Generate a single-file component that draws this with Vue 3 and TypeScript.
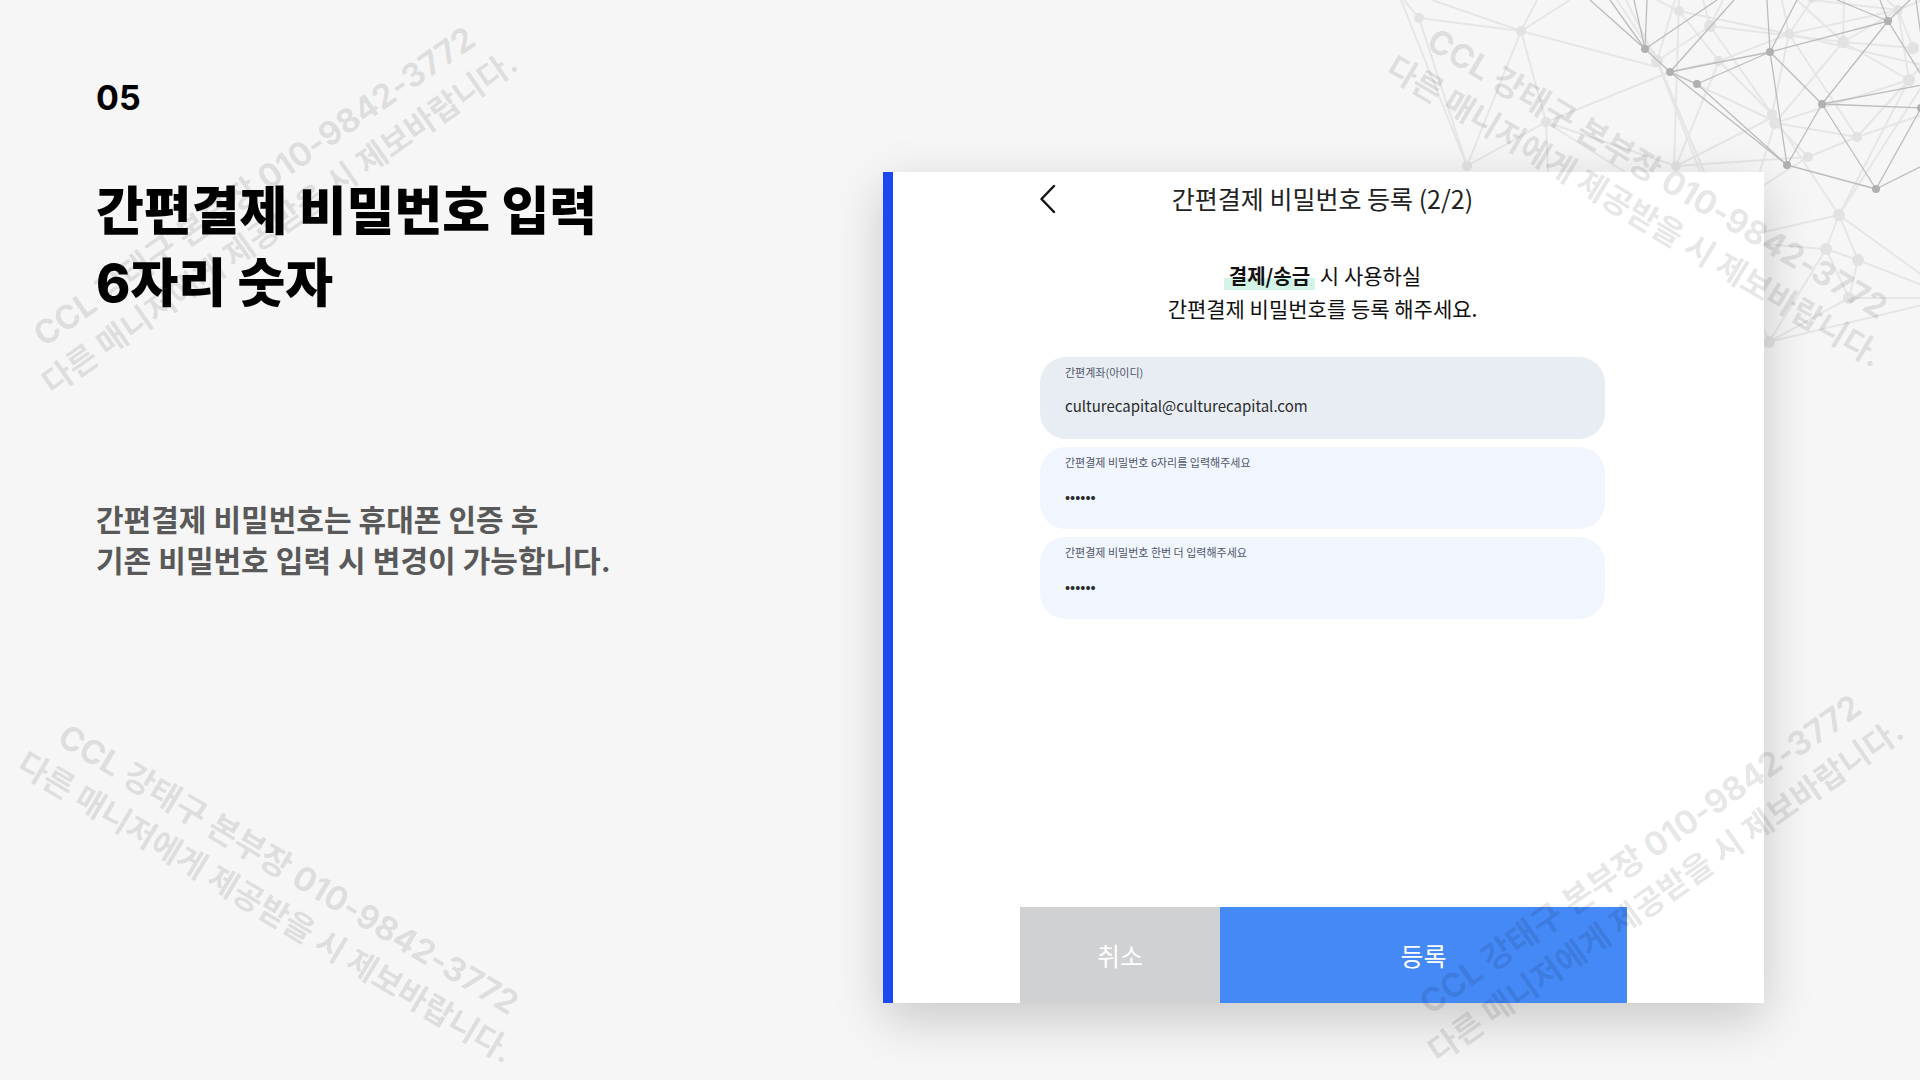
<script setup lang="ts">
import { ref } from 'vue'

interface Dot { x: number; y: number; r: number }
type Line = [number, number, number, number]

const accountId = ref('culturecapital@culturecapital.com')
const pin = ref('123456')
const pinConfirm = ref('123456')

const watermarks = ['top-left', 'top-right', 'bottom-left', 'bottom-right']

const toDots = (points: [number, number][], r: number): Dot[] => points.map(([x, y]) => ({ x, y, r }))

const darkDots = toDots(
  [[255, 49], [280, 72], [307, 84], [380, 52], [498, 21], [432, 104], [397, 165], [486, 189], [531, 108]],
  4,
)

const lightDots = [
  ...toDots(
    [[29, 18], [131, 31], [156, 122], [77, 166], [289, 11], [329, 61], [399, 34], [508, 10], [382, 114], [418, 157], [467, 137], [286, 166], [422, -2]],
    5,
  ),
  ...toDots(
    [[267, 61], [320, 26], [453, 42], [523, 48], [519, 80], [385, 123], [449, 215], [436, 249], [468, 260], [459, 298], [379, 342]],
    6,
  ),
]

const darkLines: Line[] = [
  [255, 49, 200, 0], [255, 49, 220, 0], [255, 49, 244, 0], [255, 49, 257, 0], [255, 49, 280, 72], [255, 49, 327, 0],
  [280, 72, 344, 0], [280, 72, 380, 52], [307, 84, 380, 52], [280, 72, 307, 84], [280, 72, 397, 165], [307, 84, 397, 165],
  [380, 52, 377, 0], [380, 52, 407, 0], [380, 52, 498, 21], [380, 52, 432, 104], [380, 52, 397, 165],
  [498, 21, 447, 0], [498, 21, 432, 104], [498, 21, 490, 0], [498, 21, 520, 0], [498, 21, 532, 76],
  [432, 104, 532, 85], [432, 104, 531, 108], [432, 104, 397, 165], [432, 104, 486, 189],
  [397, 165, 486, 189], [486, 189, 531, 108], [486, 189, 532, 166], [526, 0, 531, 36],
]

const lightLines: Line[] = [
  [29, 18, 131, 31], [29, 18, 14, 0], [11, 0, 77, 166], [29, 18, 77, 166], [131, 31, 42, 0], [131, 31, 147, 0],
  [131, 31, 180, 0], [131, 31, 267, 67], [131, 31, 77, 166], [131, 31, 156, 122], [156, 122, 77, 166], [156, 122, 280, 72],
  [156, 122, 158, 174], [156, 122, 238, 174], [156, 122, 286, 166], [267, 61, 227, 0], [267, 61, 236, 0], [267, 61, 311, 174],
  [263, 50, 315, 174], [289, 0, 284, 166], [267, 61, 285, 0], [289, 11, 267, 0], [289, 11, 399, 34], [289, 11, 329, 61],
  [329, 61, 382, 114], [320, 26, 453, 42], [320, 26, 313, 0], [320, 26, 382, 114], [329, 61, 286, 166], [329, 61, 399, 34],
  [267, 61, 320, 26], [280, 72, 382, 120], [280, 72, 329, 61], [320, 26, 333, 0], [399, 34, 392, 0], [399, 34, 422, 0],
  [399, 34, 508, 10], [399, 34, 382, 114], [399, 34, 467, 137], [399, 34, 532, 65], [453, 42, 454, 0], [453, 42, 523, 48],
  [453, 42, 519, 80], [453, 42, 407, 0], [453, 42, 385, 123], [453, 42, 508, 10], [422, 0, 508, 10], [508, 10, 523, 48],
  [508, 10, 497, 0], [508, 10, 519, 80], [508, 10, 532, 0], [519, 80, 385, 123], [519, 80, 467, 137], [519, 80, 449, 215],
  [532, 86, 449, 215], [385, 123, 467, 137], [385, 123, 418, 157], [418, 157, 467, 137], [418, 157, 286, 166], [382, 114, 449, 215],
  [286, 166, 385, 116], [385, 123, 369, 174], [467, 137, 532, 115], [532, 65, 519, 80], [374, 185, 418, 157],
  [449, 215, 374, 232], [449, 215, 436, 249], [449, 215, 468, 260], [449, 215, 532, 275], [374, 244, 436, 249],
  [436, 249, 468, 260], [436, 249, 459, 298], [436, 249, 379, 342], [468, 260, 459, 298], [468, 260, 532, 285],
  [459, 298, 532, 298], [459, 298, 379, 342], [379, 342, 532, 305], [379, 342, 370, 320],
]
</script>

<template>
  <main class="slide">
    <svg class="network" width="530" height="360" viewBox="0 0 530 360" aria-hidden="true">
      <g class="light-lines">
        <line v-for="(l, i) in lightLines" :key="i" :x1="l[0]" :y1="l[1]" :x2="l[2]" :y2="l[3]" />
      </g>
      <g class="light-dots">
        <circle v-for="(d, i) in lightDots" :key="i" :cx="d.x" :cy="d.y" :r="d.r" />
      </g>
      <g class="dark-lines">
        <line v-for="(l, i) in darkLines" :key="i" :x1="l[0]" :y1="l[1]" :x2="l[2]" :y2="l[3]" />
      </g>
      <g class="dark-dots">
        <circle v-for="(d, i) in darkDots" :key="i" :cx="d.x" :cy="d.y" :r="d.r" />
      </g>
    </svg>

    <section class="intro">
      <p class="step">05</p>
      <h1 class="title">간편결제 비밀번호 입력<br />6자리 숫자</h1>
      <p class="note">간편결제 비밀번호는 휴대폰 인증 후<br />기존 비밀번호 입력 시 변경이 가능합니다.</p>
    </section>

    <section class="card">
      <form class="form" @submit.prevent>
        <header class="bar">
          <button class="back" type="button" aria-label="뒤로">
            <svg width="20" height="30" viewBox="0 0 20 30" fill="none" stroke="#111" stroke-width="2.4" stroke-linecap="round" stroke-linejoin="round">
              <path d="M14 3 L1.5 16 L14 29" />
            </svg>
          </button>
          <h2 class="bar-title">간편결제 비밀번호 등록 (2/2)</h2>
        </header>

        <p class="guide"><strong class="mark">결제/송금</strong> 시 사용하실<br />간편결제 비밀번호를 등록 해주세요.</p>

        <div class="fields">
          <div class="field field-locked">
            <label for="account">간편계좌(아이디)</label>
            <input id="account" v-model="accountId" type="text" readonly />
          </div>
          <div class="field">
            <label for="pin">간편결제 비밀번호 6자리를 입력해주세요</label>
            <input id="pin" v-model="pin" type="password" maxlength="6" />
          </div>
          <div class="field">
            <label for="pin-confirm">간편결제 비밀번호 한번 더 입력해주세요</label>
            <input id="pin-confirm" v-model="pinConfirm" type="password" maxlength="6" />
          </div>
        </div>

        <div class="actions">
          <button class="cancel" type="button">취소</button>
          <button class="submit" type="submit">등록</button>
        </div>
      </form>
    </section>

    <p v-for="place in watermarks" :key="place" class="watermark" :class="place">
      <span class="contact">CCL 강태구 본부장 010-9842-3772</span><br />다른 매니저에게 제공받을 시 제보바랍니다.
    </p>
  </main>
</template>

<style>
body {
  margin: 0;
  background: #f6f6f6;
}
</style>

<style scoped>
* {
  box-sizing: border-box;
}

.slide {
  position: relative;
  display: grid;
  grid-template-columns: 787fr 881fr;
  min-height: 100vh;
  padding: 0 156px 0 96px;
  overflow: hidden;
  background: #f6f6f6;
  font-family: "Noto Sans CJK KR", sans-serif;
}

h1,
h2,
p {
  margin: 0;
}

.network {
  position: absolute;
  top: 0;
  right: 0;
}

.light-lines {
  stroke: #e6e6e6;
  stroke-width: 2;
}

.light-dots {
  fill: #e2e2e2;
}

.dark-lines {
  stroke: #bcbcbc;
  stroke-width: 1.3;
}

.dark-dots {
  fill: #b0b0b0;
}

.intro {
  position: relative;
  z-index: 2;
  padding-top: 78px;
  font-family: "Inter", "Noto Sans CJK KR", sans-serif;
}

.step {
  font-size: 34px;
  font-weight: 700;
  line-height: 40px;
  color: #000;
}

.title {
  margin-top: 58px;
  font-size: 52px;
  font-weight: 800;
  line-height: 72px;
  color: #000;
}

.note {
  margin-top: 180px;
  font-size: 30px;
  font-weight: 700;
  line-height: 41px;
  color: #595959;
}

.card {
  position: relative;
  display: flex;
  margin: 172px 0 77px;
  padding: 0 137px 0 127px;
  border-left: 10px solid #1c48f2;
  background: #fff;
  box-shadow: 0 16px 48px rgba(0, 0, 0, 0.19);
}

.form {
  display: flex;
  flex: 1;
  flex-direction: column;
}

.bar {
  display: grid;
  grid-template-columns: 40px 1fr 40px;
  align-items: center;
  height: 52px;
  padding: 0 22px 0 20px;
}

.back {
  display: flex;
  padding: 0;
  border: 0;
  background: none;
}

.bar-title {
  font-size: 25px;
  font-weight: 400;
  line-height: 36px;
  text-align: center;
  color: #222;
}

.guide {
  margin-top: 35px;
  padding: 0 22px 0 20px;
  font-size: 21px;
  line-height: 33px;
  text-align: center;
  color: #111;
}

.mark {
  padding: 0 5px;
  font-size: 20px;
  font-weight: 700;
  background: linear-gradient(transparent 60%, #d4f4e8 60%);
}

.fields {
  display: flex;
  flex-direction: column;
  gap: 8px;
  margin-top: 32px;
  padding: 0 22px 0 20px;
}

.field {
  height: 82px;
  padding: 6px 25px;
  border-radius: 26px;
  background: #f0f5fe;
}

.field-locked {
  background: #e8edf4;
}

.field label {
  display: block;
  font-size: 11px;
  line-height: 18px;
  color: #50556a;
}

.field input {
  display: block;
  width: 100%;
  height: 32px;
  margin-top: 8px;
  padding: 0;
  border: 0;
  outline: 0;
  background: none;
  font-family: "Noto Sans CJK KR", sans-serif;
  font-size: 15px;
  color: #2b2b2b;
}

.actions {
  display: grid;
  grid-template-columns: 200fr 407fr;
  margin-top: auto;
}

.actions button {
  height: 96px;
  padding: 0;
  border: 0;
  font-family: inherit;
  font-size: 25px;
  color: #fff;
}

.actions .cancel {
  background: #cfd1d3;
}

.actions .submit {
  background: #4489f6;
}

.watermark {
  position: absolute;
  z-index: 1;
  width: 620px;
  font-family: "Inter", "Noto Sans CJK KR", sans-serif;
  font-size: 32px;
  font-weight: 700;
  line-height: 44px;
  text-align: center;
  color: rgba(0, 0, 0, 0.11);
  pointer-events: none;
}

.contact {
  font-size: 33px;
}

.top-left {
  top: 160px;
  left: -43px;
  transform: rotate(-35deg);
}

.top-right {
  top: 148px;
  right: -36px;
  transform: rotate(31deg);
}

.bottom-left {
  bottom: 147px;
  left: -33px;
  transform: rotate(31deg);
}

.bottom-right {
  bottom: 163px;
  right: -43px;
  transform: rotate(-35deg);
}
</style>
